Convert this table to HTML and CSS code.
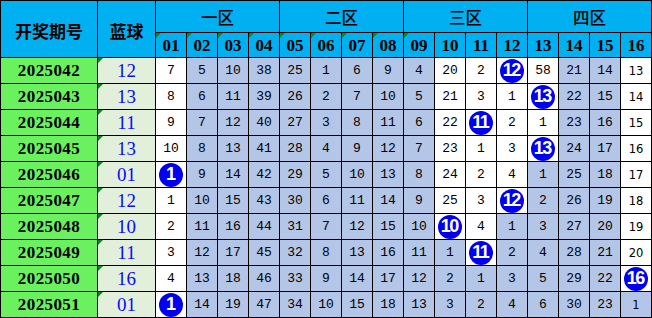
FILE: index.html
```html
<!DOCTYPE html>
<html lang="zh">
<head>
<meta charset="utf-8">
<title>蓝球走势</title>
<link rel="stylesheet" href="styles.css">
</head>
<body>
<div class="sheet">
  <div class="h h-period">开奖期号</div>
  <div class="h h-blue">蓝球</div>
  <div class="h zone z1">一区</div>
  <div class="h zone z2">二区</div>
  <div class="h zone z3">三区</div>
  <div class="h zone z4">四区</div>
  <div class="h num tri">01</div><div class="h num tri">02</div><div class="h num tri">03</div><div class="h num tri">04</div>
  <div class="h num tri">05</div><div class="h num tri">06</div><div class="h num tri">07</div><div class="h num tri">08</div>
  <div class="h num tri">09</div><div class="h num">10</div><div class="h num">11</div><div class="h num">12</div>
  <div class="h num">13</div><div class="h num">14</div><div class="h num">15</div><div class="h num">16</div>

  <div class="period">2025042</div><div class="bv tri">12</div>
  <div class="c">7</div><div class="c b">5</div><div class="c b">10</div><div class="c b">38</div><div class="c b">25</div><div class="c b">1</div><div class="c b">6</div><div class="c b">9</div><div class="c b">4</div><div class="c">20</div><div class="c">2</div><div class="c"><span class="ball">12</span></div><div class="c">58</div><div class="c b">21</div><div class="c b">14</div><div class="c t">13</div>

  <div class="period">2025043</div><div class="bv tri">13</div>
  <div class="c">8</div><div class="c b">6</div><div class="c b">11</div><div class="c b">39</div><div class="c b">26</div><div class="c b">2</div><div class="c b">7</div><div class="c b">10</div><div class="c b">5</div><div class="c">21</div><div class="c">3</div><div class="c">1</div><div class="c"><span class="ball">13</span></div><div class="c b">22</div><div class="c b">15</div><div class="c t">14</div>

  <div class="period">2025044</div><div class="bv tri">11</div>
  <div class="c">9</div><div class="c b">7</div><div class="c b">12</div><div class="c b">40</div><div class="c b">27</div><div class="c b">3</div><div class="c b">8</div><div class="c b">11</div><div class="c b">6</div><div class="c">22</div><div class="c"><span class="ball">11</span></div><div class="c">2</div><div class="c">1</div><div class="c b">23</div><div class="c b">16</div><div class="c t">15</div>

  <div class="period">2025045</div><div class="bv tri">13</div>
  <div class="c">10</div><div class="c b">8</div><div class="c b">13</div><div class="c b">41</div><div class="c b">28</div><div class="c b">4</div><div class="c b">9</div><div class="c b">12</div><div class="c b">7</div><div class="c">23</div><div class="c">1</div><div class="c">3</div><div class="c"><span class="ball">13</span></div><div class="c b">24</div><div class="c b">17</div><div class="c t">16</div>

  <div class="period">2025046</div><div class="bv tri">01</div>
  <div class="c"><span class="ball">1</span></div><div class="c b">9</div><div class="c b">14</div><div class="c b">42</div><div class="c b">29</div><div class="c b">5</div><div class="c b">10</div><div class="c b">13</div><div class="c b">8</div><div class="c">24</div><div class="c">2</div><div class="c">4</div><div class="c b">1</div><div class="c b">25</div><div class="c b">18</div><div class="c t">17</div>

  <div class="period">2025047</div><div class="bv tri">12</div>
  <div class="c">1</div><div class="c b">10</div><div class="c b">15</div><div class="c b">43</div><div class="c b">30</div><div class="c b">6</div><div class="c b">11</div><div class="c b">14</div><div class="c b">9</div><div class="c">25</div><div class="c">3</div><div class="c"><span class="ball">12</span></div><div class="c b">2</div><div class="c b">26</div><div class="c b">19</div><div class="c t">18</div>

  <div class="period">2025048</div><div class="bv tri">10</div>
  <div class="c">2</div><div class="c b">11</div><div class="c b">16</div><div class="c b">44</div><div class="c b">31</div><div class="c b">7</div><div class="c b">12</div><div class="c b">15</div><div class="c b">10</div><div class="c"><span class="ball">10</span></div><div class="c">4</div><div class="c b">1</div><div class="c b">3</div><div class="c b">27</div><div class="c b">20</div><div class="c t">19</div>

  <div class="period">2025049</div><div class="bv tri">11</div>
  <div class="c">3</div><div class="c b">12</div><div class="c b">17</div><div class="c b">45</div><div class="c b">32</div><div class="c b">8</div><div class="c b">13</div><div class="c b">16</div><div class="c b">11</div><div class="c b">1</div><div class="c"><span class="ball">11</span></div><div class="c b">2</div><div class="c b">4</div><div class="c b">28</div><div class="c b">21</div><div class="c t">20</div>

  <div class="period">2025050</div><div class="bv tri">16</div>
  <div class="c">4</div><div class="c b">13</div><div class="c b">18</div><div class="c b">46</div><div class="c b">33</div><div class="c b">9</div><div class="c b">14</div><div class="c b">17</div><div class="c b">12</div><div class="c b">2</div><div class="c b">1</div><div class="c b">3</div><div class="c b">5</div><div class="c b">29</div><div class="c b">22</div><div class="c t"><span class="ball">16</span></div>

  <div class="period">2025051</div><div class="bv tri">01</div>
  <div class="c"><span class="ball">1</span></div><div class="c b">14</div><div class="c b">19</div><div class="c b">47</div><div class="c b">34</div><div class="c b">10</div><div class="c b">15</div><div class="c b">18</div><div class="c b">13</div><div class="c b">3</div><div class="c b">2</div><div class="c b">4</div><div class="c b">6</div><div class="c b">30</div><div class="c b">23</div><div class="c b t">1</div>
</div>
</body>
</html>
```

FILE: styles.css
```css
html, body {
  margin: 0;
  padding: 0;
  background: #ffffff;
}

.sheet {
  display: grid;
  grid-template-columns: 96px 57px repeat(16, 30px);
  grid-template-rows: 31px 24px repeat(10, 25px);
  gap: 1px;
  padding: 1px;
  width: 650px;
  background: #000000;
}

.sheet > div {
  display: flex;
  align-items: center;
  justify-content: center;
  position: relative;
  overflow: hidden;
}

.h {
  background: #00b0f0;
  color: #000000;
}

.h-period,
.h-blue {
  grid-row: 1 / span 2;
  font-family: "Noto Sans CJK SC", sans-serif;
  font-weight: 700;
  font-size: 17px;
  padding-top: 2px;
}

.h-period { grid-column: 1; }
.h-blue { grid-column: 2; }

.zone {
  font-family: "Noto Sans CJK SC", sans-serif;
  font-weight: 500;
  font-size: 16.5px;
  grid-row: 1;
}
.z1 { grid-column: 3 / span 4; }
.z2 { grid-column: 7 / span 4; }
.z3 { grid-column: 11 / span 4; }
.z4 { grid-column: 15 / span 4; }

.num {
  grid-row: 2;
  font-family: "Liberation Serif", serif;
  font-weight: 700;
  font-size: 17px;
  padding-top: 1px;
}

.period {
  background: #6bf060;
  font-family: "Liberation Serif", serif;
  font-weight: 700;
  font-size: 17px;
  letter-spacing: 0.4px;
}

.bv {
  background: #e2efda;
  color: #0a0aff;
  font-family: "Liberation Serif", serif;
  font-size: 19px;
}

.tri::before {
  content: "";
  position: absolute;
  left: 0;
  top: 0;
  width: 0;
  height: 0;
  border-top: 5px solid #0a8a1a;
  border-right: 5px solid transparent;
}

.c {
  background: #ffffff;
  color: #000000;
  font-family: "Liberation Mono", monospace;
  font-size: 13px;
}

.c.b {
  background: #b4c6e7;
}

.c.t {
  font-family: "DejaVu Sans", sans-serif;
  font-size: 11.5px;
}

.ball {
  display: flex;
  align-items: center;
  justify-content: center;
  width: 24px;
  height: 24px;
  border-radius: 50%;
  background: #0000f0;
  color: #ffffff;
  font-family: "Liberation Sans", sans-serif;
  font-weight: 700;
  font-size: 18px;
  letter-spacing: -1.5px;
  text-indent: -1.5px;
}
```
